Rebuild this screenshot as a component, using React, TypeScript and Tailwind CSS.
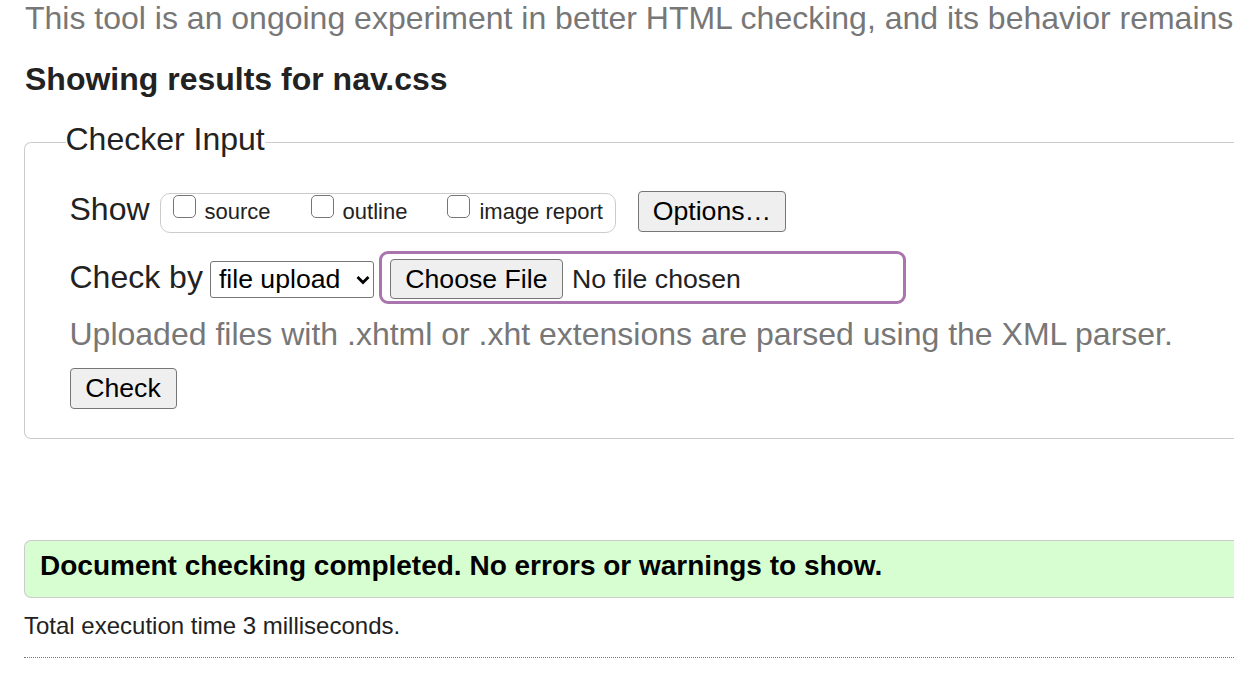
import React from "react";

const font = { fontFamily: '"Liberation Sans", Arial, Helvetica, sans-serif' };

function Box({ label }: { label: string }) {
  return (
    <label className="flex items-start">
      <input
        type="checkbox"
        className="m-0 mt-[1px] h-[23px] w-[23px] appearance-none rounded-[5px] border-[1.5px] border-[#767676] bg-white"
      />
      <span className="ml-[9px] mt-[5px] text-[22px] leading-[26px] text-[#222]">{label}</span>
    </label>
  );
}

export default function App() {
  return (
    <div className="h-[690px] w-[1234px] overflow-hidden bg-white" style={font}>
      <div className="w-[1500px] pl-[24px]">
        <p className="whitespace-nowrap pl-[1px] text-[32px] leading-[36px] text-[#777]">
          This tool is an ongoing experiment in better HTML checking, and its behavior remains
        </p>

        <h2 className="mt-[25px] pl-[1px] text-[32px] font-bold leading-[36px] text-[#222]">
          Showing results for nav.css
        </h2>

        <fieldset className="mt-[24px] rounded-l-[7px] border-[1.5px] border-r-0 border-[#ccc] pb-[29px] pl-[44.5px] pt-[28px]">
          <legend className="-ml-[4px] px-0 pb-[6px] text-[32px] leading-[36px] text-[#222]">Checker Input</legend>

          <div className="flex items-start">
            <span className="text-[32px] leading-[36px] text-[#222]">Show</span>
            <div className="ml-[10px] mt-[2px] flex h-[40px] items-start gap-[40px] rounded-[10px] border-[1.5px] border-[#ccc] pl-[12px] pr-[12px]">
              <Box label="source" />
              <Box label="outline" />
              <Box label="image report" />
            </div>
            <button className="ml-[22px] flex h-[41px] w-[148px] items-center justify-center rounded-[4px] border-[1.5px] border-[#767676] bg-[#efefef] text-[26.67px] leading-[31px] text-black">
              Options…
            </button>
          </div>

          <div className="mt-[18px] flex items-start">
            <span className="mt-[8px] text-[32px] leading-[36px] text-[#222]">Check by</span>
            <div className="ml-[7px] mt-[10px] flex h-[37px] w-[164px] items-center justify-between rounded-[3px] border-[1.5px] border-[#767676] bg-white pl-[8px] pr-[3px]">
              <span className="text-[26.67px] leading-[31px] text-black">file upload</span>
              <svg width="14" height="10" viewBox="0 0 14 10">
                <path d="M1.5 2 L7 7.5 L12.5 2" fill="none" stroke="#000" strokeWidth="2.8" />
              </svg>
            </div>
            <div className="ml-[5px] flex h-[53px] w-[527px] items-start rounded-[9px] border-[3px] border-[#a875ac] pl-[8px] pt-[5px]">
              <button className="flex h-[40px] w-[173px] items-center justify-center rounded-[4px] border-[1.5px] border-[#767676] bg-[#efefef] text-[26.67px] leading-[31px] text-black">
                Choose File
              </button>
              <span className="ml-[9px] mt-[4.5px] text-[26.67px] leading-[31px] text-[#222]">No file chosen</span>
            </div>
          </div>

          <p className="mt-[12px] whitespace-nowrap text-[32px] leading-[36px] text-[#777]">
            Uploaded files with .xhtml or .xht extensions are parsed using the XML parser.
          </p>

          <button className="mt-[16px] flex h-[41px] w-[107px] items-center justify-center rounded-[4px] border-[1.5px] border-[#767676] bg-[#efefef] text-[26.67px] leading-[31px] text-black">
            Check
          </button>
        </fieldset>

        <div className="mt-[101px] flex h-[58px] items-start rounded-l-[7px] border-[1.5px] border-r-0 border-[#ccc] bg-[#d7fed1] pl-[15px] pt-[9px]">
          <span className="text-[28px] font-bold leading-[32px] text-black">
            Document checking completed. No errors or warnings to show.
          </span>
        </div>

        <p className="mt-[14px] text-[24px] leading-[28px] text-[#222]">Total execution time 3 milliseconds.</p>

        <div className="mt-[17px] border-t border-dotted border-[#777]" />
      </div>
    </div>
  );
}
